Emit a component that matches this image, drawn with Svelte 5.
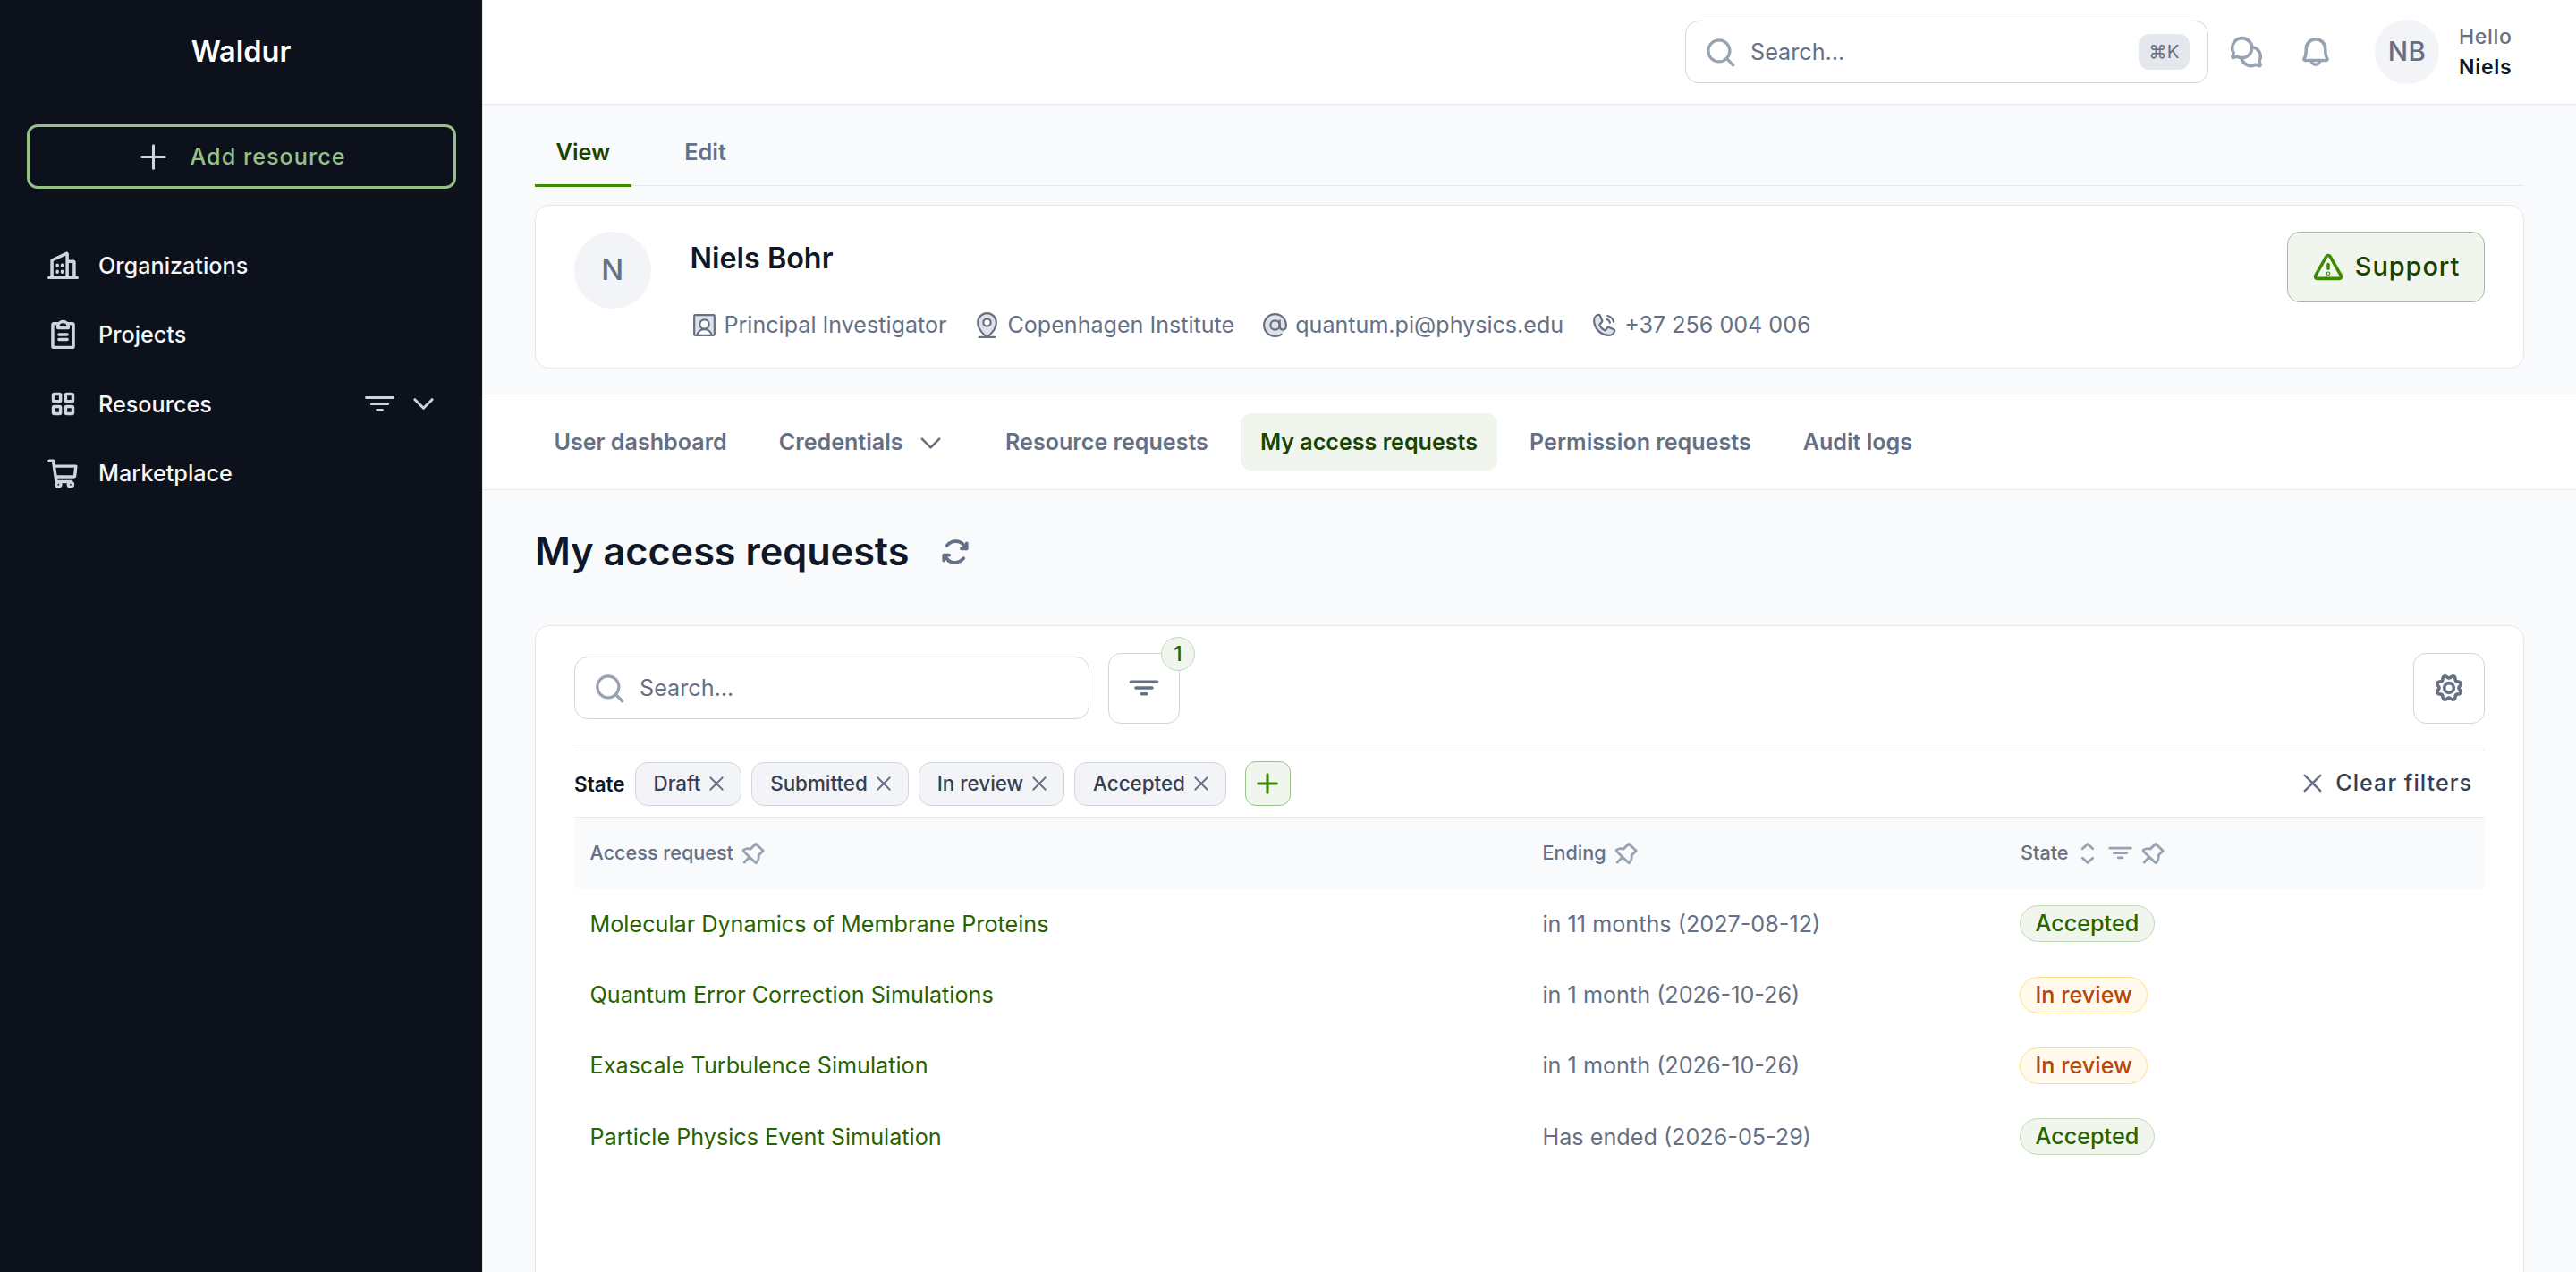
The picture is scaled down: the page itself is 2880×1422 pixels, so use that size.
<script lang="ts">
	interface Tab {
		label: string;
		active?: boolean;
		caret?: boolean;
	}

	interface AccessRequest {
		name: string;
		ending: string;
		state: "Accepted" | "In review";
	}

	const menu = [
		{ label: "Organizations", icon: "building" },
		{ label: "Projects", icon: "clipboard" },
		{ label: "Resources", icon: "squares", expandable: true },
		{ label: "Marketplace", icon: "cart" }
	];

	const contacts = [
		{ icon: "user", text: "Principal Investigator" },
		{ icon: "pinmap", text: "Copenhagen Institute" },
		{ icon: "at", text: "quantum.pi@physics.edu" },
		{ icon: "phone", text: "+37 256 004 006" }
	];

	const tabs: Tab[] = [
		{ label: "User dashboard" },
		{ label: "Credentials", caret: true },
		{ label: "Resource requests" },
		{ label: "My access requests", active: true },
		{ label: "Permission requests" },
		{ label: "Audit logs" }
	];

	const rows: AccessRequest[] = [
		{ name: "Molecular Dynamics of Membrane Proteins", ending: "in 11 months (2027-08-12)", state: "Accepted" },
		{ name: "Quantum Error Correction Simulations", ending: "in 1 month (2026-10-26)", state: "In review" },
		{ name: "Exascale Turbulence Simulation", ending: "in 1 month (2026-10-26)", state: "In review" },
		{ name: "Particle Physics Event Simulation", ending: "Has ended (2026-05-29)", state: "Accepted" }
	];

	let filters = $state(["Draft", "Submitted", "In review", "Accepted"]);

	function removeFilter(name: string) {
		filters = filters.filter((f) => f !== name);
	}

	// outline of the eight-lobed settings wheel
	const gear =
		"M" +
		Array.from({ length: 96 }, (_, i) => {
			const a = (i / 96) * Math.PI * 2;
			const r = 89 - 11 * Math.cos(8 * a);
			return `${(128 + r * Math.cos(a)).toFixed(1)} ${(128 + r * Math.sin(a)).toFixed(1)}`;
		}).join("L") +
		"Z";
</script>

{#snippet icon(name: string, size: number, stroke = 24)}
	<svg
		class="icon"
		width={size}
		height={size}
		viewBox="0 0 256 256"
		fill="none"
		stroke="currentColor"
		stroke-width={stroke}
		stroke-linecap="round"
		stroke-linejoin="round"
	>
		{#if name === "plus"}
			<path d="M40 128H216M128 40V216" />
		{:else if name === "close"}
			<path d="M200 56L56 200M56 56L200 200" />
		{:else if name === "search"}
			<circle cx="116" cy="116" r="88" />
			<path d="M178 178L232 232" />
		{:else if name === "caret"}
			<path d="M208 88L128 168L48 88" />
		{:else if name === "filter"}
			<path d="M24 80H232M64 128H192M108 176H148" />
		{:else if name === "building"}
			<path d="M19 224H237M42 224V90L154 37Q160 34 160 42V224M160 98H206Q214 98 214 106V224" />
			<path d="M84 126V134M121 126V134M84 174V182M121 174V182" />
		{:else if name === "clipboard"}
			<path d="M168 40H200A8 8 0 0 1 208 48V216A8 8 0 0 1 200 224H56A8 8 0 0 1 48 216V48A8 8 0 0 1 56 40H88" />
			<path d="M88 72V64A40 40 0 0 1 168 64V72ZM96 124H160M96 162H160" />
		{:else if name === "squares"}
			<rect x="52" y="52" width="56" height="56" rx="8" />
			<rect x="148" y="52" width="56" height="56" rx="8" />
			<rect x="52" y="148" width="56" height="56" rx="8" />
			<rect x="148" y="148" width="56" height="56" rx="8" />
		{:else if name === "cart"}
			<path d="M20 30H52L76 190H190M58 70H227L219 144Q218 152 210 152H71" />
			<circle cx="92" cy="212" r="18" />
			<circle cx="186" cy="212" r="18" />
		{:else if name === "chats"}
			<path d="M34 132A72 72 0 1 1 60 158L34 166A6 6 0 0 1 26 158Z" />
			<path d="M164 90A68 68 0 0 1 222 192L230 218A6 6 0 0 1 222 226L196 218A72 72 0 0 1 92 170" />
		{:else if name === "bell"}
			<path d="M56 104a72 72 0 0 1 144 0c0 35.8 8.3 64.6 14.9 76A8 8 0 0 1 208 192H48a8 8 0 0 1-6.9-12C47.7 168.6 56 139.8 56 104Z" />
			<path d="M96 192a32 32 0 0 0 64 0" />
		{:else if name === "user"}
			<rect class="tint" x="40" y="40" width="176" height="176" rx="8" />
			<circle cx="128" cy="120" r="40" fill="#fff" />
			<path d="M64 214a66 66 0 0 1 128 0" fill="#fff" />
			<rect x="40" y="40" width="176" height="176" rx="8" />
		{:else if name === "pinmap"}
			<path class="tint" d="M208 104c0 72-80 128-80 128S48 176 48 104a80 80 0 0 1 160 0Z" />
			<path d="M208 104c0 72-80 128-80 128S48 176 48 104a80 80 0 0 1 160 0ZM60 232H196" />
			<circle cx="128" cy="104" r="32" fill="#fff" />
		{:else if name === "at"}
			<circle class="tint" cx="128" cy="128" r="96" />
			<circle cx="128" cy="128" r="40" />
			<path d="M184 208c-15.2 10.1-36.4 16-56 16a96 96 0 1 1 96-96c0 22.1-8 40-28 40s-28-17.9-28-40V88" />
		{:else if name === "phone"}
			<path
				fill="#667085"
				fill-opacity="0.2"
				d="M159.4 145.5a8 8 0 0 1 7.6-.7l47.1 21.1a8 8 0 0 1 4.8 8.3A48.3 48.3 0 0 1 171 216 131 131 0 0 1 40 85a48.3 48.3 0 0 1 41.8-47.9 8 8 0 0 1 8.3 4.8l21.1 47.2a8 8 0 0 1-.7 7.5L89.2 121.9a7.9 7.9 0 0 0-.6 7.9c8.3 16.9 25.8 34.2 42.8 42.4a7.9 7.9 0 0 0 7.8-.6Z"
			/>
			<path d="M157.5 46.2A72 72 0 0 1 209.8 98.5M149 78a40 40 0 0 1 29 29" />
		{:else if name === "warning"}
			<path d="M142.4 40.2l87.5 151.9C236 202.8 228 216 215.5 216H40.5C28 216 20 202.8 26.1 192.1L113.6 40.2C119.9 29.3 136.1 29.3 142.4 40.2ZM128 104V136" />
			<circle cx="128" cy="176" r="4" />
		{:else if name === "refresh"}
			<path d="M224 56V100H180M32 200V156H76" />
			<path d="M58 74C96 28 168 24 204 76L222 100M198 182C160 228 88 232 52 180L34 156" />
		{:else if name === "gear"}
			<path d={gear} />
			<circle cx="128" cy="128" r="38" />
		{:else if name === "pin"}
			<path d="M158 22L238 98L188 150C194 178 186 202 170 226Q162 236 152 228L24 106Q16 98 26 90C46 76 66 70 98 80ZM88 168L32 226" />
		{:else if name === "sort"}
			<path d="M72 76L128 24L184 76M72 180L128 232L184 180" />
		{/if}
	</svg>
{/snippet}

<div class="app">
	<aside class="sidebar">
		<div class="brand">Waldur</div>
		<button class="add-resource">
			{@render icon("plus", 37, 21)}
			<span>Add resource</span>
		</button>
		<nav class="menu">
			{#each menu as item}
				<a href="#{item.label}" class="menu-item">
					{@render icon(item.icon, 37)}
					<span class="menu-label">{item.label}</span>
					{#if item.expandable}
						<span class="menu-filter">{@render icon("filter", 37, 20)}</span>
						{@render icon("caret", 31, 24)}
					{/if}
				</a>
			{/each}
		</nav>
	</aside>

	<div class="main">
		<header class="header">
			<div class="search header-search">
				{@render icon("search", 35, 24)}
				<span class="placeholder">Search...</span>
				<kbd>⌘K</kbd>
			</div>
			<button class="header-button">{@render icon("chats", 39, 24)}</button>
			<button class="header-button bell">{@render icon("bell", 38, 24)}</button>
			<div class="avatar">NB</div>
			<div class="greeting">
				<span>Hello</span>
				<strong>Niels</strong>
			</div>
		</header>

		<section class="hero">
			<div class="page-tabs">
				<a href="#view" class="page-tab active">View</a>
				<a href="#edit" class="page-tab">Edit</a>
			</div>
			<div class="profile">
				<div class="avatar large">N</div>
				<div class="profile-body">
					<h2>Niels Bohr</h2>
					<div class="contacts">
						{#each contacts as contact}
							<span class="contact">
								{@render icon(contact.icon, 33, 17)}
								<span>{contact.text}</span>
							</span>
						{/each}
					</div>
				</div>
				<button class="support">
					{@render icon("warning", 36, 25)}
					<span>Support</span>
				</button>
			</div>
		</section>

		<nav class="tabs">
			{#each tabs as tab}
				<a href="#{tab.label}" class="tab" class:active={tab.active}>
					{tab.label}
					{#if tab.caret}
						{@render icon("caret", 31, 22)}
					{/if}
				</a>
			{/each}
		</nav>

		<section class="content">
			<div class="title-row">
				<h1>My access requests</h1>
				<button class="refresh">{@render icon("refresh", 34, 28)}</button>
			</div>

			<div class="card">
				<div class="toolbar">
					<div class="search table-search">
						{@render icon("search", 35, 24)}
						<span class="placeholder">Search...</span>
					</div>
					<button class="square-button">
						{@render icon("filter", 36, 25)}
						<span class="count">1</span>
					</button>
					<button class="square-button settings">{@render icon("gear", 36, 26)}</button>
				</div>

				<div class="filters">
					<span class="filter-name">State</span>
					{#each filters as filter}
						<button class="chip" onclick={() => removeFilter(filter)}>
							{filter}
							{@render icon("close", 24, 20)}
						</button>
					{/each}
					<button class="add-filter">{@render icon("plus", 30, 26)}</button>
					<button class="clear">
						{@render icon("close", 31, 21)}
						<span>Clear filters</span>
					</button>
				</div>

				<div class="row head">
					<div class="cell">Access request <span class="head-icon">{@render icon("pin", 26, 28)}</span></div>
					<div class="cell">Ending <span class="head-icon">{@render icon("pin", 26, 28)}</span></div>
					<div class="cell">
						State
						<span class="head-icon sort">{@render icon("sort", 26, 28)}</span>
						<span class="head-icon">{@render icon("filter", 29, 25)}</span>
						<span class="head-icon">{@render icon("pin", 26, 28)}</span>
					</div>
				</div>
				{#each rows as row}
					<div class="row">
						<div class="cell"><a href="#{row.name}" class="link">{row.name}</a></div>
						<div class="cell">{row.ending}</div>
						<div class="cell">
							<span class="badge" class:review={row.state === "In review"}>{row.state}</span>
						</div>
					</div>
				{/each}
			</div>
		</section>
	</div>
</div>

<style>
	:global(body) {
		margin: 0;
		overflow: hidden;
	}

	.app {
		display: flex;
		width: 2880px;
		height: 1422px;
		overflow: hidden;
		background: #f9fafc;
		font-family: Inter, sans-serif;
		font-size: 25.2px;
		line-height: 1.2;
		color: #667085;
	}

	.app * {
		box-sizing: border-box;
	}

	.app a {
		text-decoration: none;
	}

	button {
		display: flex;
		align-items: center;
		padding: 0;
		border: none;
		background: none;
		font: inherit;
		color: inherit;
		white-space: nowrap;
	}

	.icon {
		display: block;
		flex: none;
	}

	.tint {
		fill: #667085;
		fill-opacity: 0.2;
		stroke: none;
	}

	.sidebar {
		flex: none;
		width: 540px;
		border-right: 1px solid #e4e7ec;
		background: #0c111c;
	}

	.brand {
		display: flex;
		align-items: center;
		justify-content: center;
		height: 115px;
		margin-bottom: 24px;
		font-size: 32.5px;
		font-weight: 600;
		color: #fff;
	}

	.add-resource {
		justify-content: center;
		gap: 22px;
		width: 480px;
		height: 72px;
		margin: 0 0 47px 30px;
		border: 3px solid #95c086;
		border-radius: 12px;
		font-weight: 500;
		letter-spacing: 1px;
		color: #95c086;
	}

	.add-resource .icon {
		color: #d0d5dd;
	}

	.menu-item {
		display: flex;
		align-items: center;
		height: 77.6px;
		padding: 0 50px 0 51.5px;
		font-weight: 500;
		color: #f5f6f8;
	}

	.menu-item .icon {
		color: #d0d5dd;
	}

	.menu-label {
		flex: 1;
		margin-left: 21.5px;
	}

	.menu-filter {
		margin-right: 15px;
	}

	.main {
		flex: 1;
		min-width: 0;
	}

	.header {
		display: flex;
		align-items: center;
		justify-content: flex-end;
		height: 117px;
		border-bottom: 1px solid #e4e7ec;
		background: #fff;
	}

	.search {
		display: flex;
		align-items: center;
		height: 70px;
		padding: 0 20px 0 21px;
		border: 1px solid #d0d5dd;
		border-radius: 15px;
		background: #fff;
	}

	.search .icon,
	.header-button {
		color: #98a2b3;
	}

	.placeholder {
		flex: 1;
		margin-left: 16px;
	}

	.header-search {
		width: 585px;
		margin-right: 23px;
	}

	kbd {
		display: flex;
		align-items: center;
		justify-content: center;
		width: 57px;
		height: 40px;
		border-radius: 12px;
		background: #e4e7ec;
		font-family: inherit;
		font-size: 20.5px;
	}

	.bell {
		margin: 0 47px 0 39px;
	}

	.avatar {
		display: flex;
		flex: none;
		align-items: center;
		justify-content: center;
		width: 72px;
		height: 72px;
		border-radius: 50%;
		background: #f2f4f7;
		font-size: 29.5px;
		font-weight: 500;
		letter-spacing: 0.5px;
	}

	.avatar.large {
		width: 86px;
		height: 86px;
		font-size: 33px;
	}

	.greeting {
		display: flex;
		flex-direction: column;
		width: 131px;
		margin-left: 22px;
		font-size: 23px;
		font-weight: 500;
		line-height: 34px;
		letter-spacing: 0.7px;
	}

	.greeting strong {
		font-weight: 600;
		color: #101828;
	}

	.hero {
		padding: 0 58px 28px;
	}

	.page-tabs {
		display: flex;
		gap: 36px;
		height: 91px;
		padding-top: 16px;
		border-bottom: 1px solid #e4e7ec;
	}

	.page-tab {
		position: relative;
		display: flex;
		align-items: center;
		padding: 0 23.6px;
		font-weight: 600;
		color: #667085;
	}

	.page-tab.active {
		color: #1a4200;
	}

	.page-tab.active::after {
		content: "";
		position: absolute;
		right: 0;
		bottom: -2px;
		left: 0;
		height: 3px;
		background: #3b8a00;
	}

	.profile {
		display: flex;
		align-items: flex-start;
		height: 183px;
		margin-top: 21px;
		padding: 29px 43px;
		border: 1px solid #e4e7ec;
		border-radius: 16px;
		background: #fff;
	}

	.profile-body {
		flex: 1;
		margin-left: 43.5px;
	}

	h2 {
		margin: 10px 0 38px;
		font-size: 32.3px;
		font-weight: 600;
		line-height: 40px;
		color: #101828;
	}

	.contacts {
		display: flex;
		gap: 29px;
		margin-left: -1px;
		font-size: 25.1px;
	}

	.contact {
		display: flex;
		align-items: center;
		gap: 6px;
	}

	.support {
		justify-content: center;
		gap: 12px;
		width: 221px;
		height: 79px;
		border: 1px solid #98c58a;
		border-radius: 14px;
		background: #f0f5ee;
		font-size: 29px;
		font-weight: 500;
		letter-spacing: 0.9px;
		color: #1a4200;
	}

	.support .icon {
		color: #3b8a00;
	}

	.tabs {
		display: flex;
		align-items: center;
		gap: 14px;
		height: 108px;
		padding: 0 57.5px;
		border: solid #e4e7ec;
		border-width: 1px 0;
		background: #fff;
		font-size: 25.1px;
	}

	.tab {
		display: flex;
		align-items: center;
		height: 64px;
		padding: 0 22px;
		border-radius: 12px;
		font-weight: 600;
		color: #667085;
	}

	.tab .icon {
		margin: 2px 10px 0 15.5px;
	}

	.tab.active {
		background: #f0f5ee;
		color: #1a4200;
	}

	.content {
		padding: 0 58px;
	}

	.title-row {
		display: flex;
		align-items: center;
		gap: 35px;
		height: 137px;
		margin-bottom: 14px;
	}

	h1 {
		margin: 0;
		font-size: 43.2px;
		font-weight: 600;
		color: #101828;
	}

	.card {
		height: 760px;
		padding: 0 43px;
		border: 1px solid #e4e7ec;
		border-radius: 16px;
		background: #fff;
	}

	.toolbar {
		display: flex;
		align-items: center;
		height: 139px;
		border-bottom: 1px solid #e4e7ec;
	}

	.table-search {
		width: 576px;
		margin-right: 21px;
	}

	.square-button {
		position: relative;
		justify-content: center;
		width: 80px;
		height: 79px;
		border: 1px solid #d0d5dd;
		border-radius: 14px;
	}

	.settings {
		margin-left: auto;
	}

	.count {
		position: absolute;
		top: -19px;
		right: -18px;
		width: 38px;
		height: 38px;
		border: 1px solid #c1dab8;
		border-radius: 50%;
		background: #f0f5ee;
		font-size: 22.5px;
		font-weight: 500;
		line-height: 36px;
		text-align: center;
		color: #286300;
	}

	.filters {
		display: flex;
		align-items: center;
		gap: 11px;
		height: 75px;
		border-bottom: 1px solid #e4e7ec;
		font-size: 22.5px;
	}

	.filter-name {
		font-weight: 600;
		color: #101828;
	}

	.chip {
		gap: 6px;
		height: 49px;
		padding: 0 15px 0 19.9px;
		border: 1px solid #d0d5dd;
		border-radius: 14px;
		background: #f2f4f7;
		font-size: 22.4px;
		font-weight: 500;
		color: #344054;
	}

	.chip .icon,
	.clear .icon {
		color: #667085;
	}

	.add-filter {
		justify-content: center;
		width: 51px;
		height: 50px;
		margin-left: 10px;
		border: 1px solid #98c58a;
		border-radius: 12px;
		background: #f0f5ee;
		color: #3b8a00;
	}

	.clear {
		gap: 10px;
		margin: 0 14px 0 auto;
		padding-bottom: 2px;
		font-size: 25.2px;
		font-weight: 500;
		letter-spacing: 1px;
		color: #344054;
	}

	.row {
		display: grid;
		grid-template-columns: 1065px 534.5px 1fr;
		height: 79.4px;
	}

	.head {
		height: 79px;
		background: #f9fafc;
		font-size: 21.6px;
		font-weight: 500;
	}

	.cell {
		display: flex;
		align-items: center;
		padding-left: 17.5px;
	}

	.head-icon {
		margin-left: 9.5px;
		color: #98a2b3;
	}

	.head-icon.sort {
		margin-left: 8px;
	}

	.head-icon + .head-icon {
		margin-left: 9px;
	}

	.link {
		color: #286300;
	}

	.badge {
		height: 41px;
		margin-left: -1px;
		padding: 0 16.5px;
		border: 1px solid #c1dab8;
		border-radius: 21px;
		background: #f0f5ee;
		font-weight: 500;
		line-height: 39px;
		color: #286300;
	}

	.badge.review {
		border-color: #fedf89;
		background: #fffaeb;
		color: #b54708;
	}
</style>
